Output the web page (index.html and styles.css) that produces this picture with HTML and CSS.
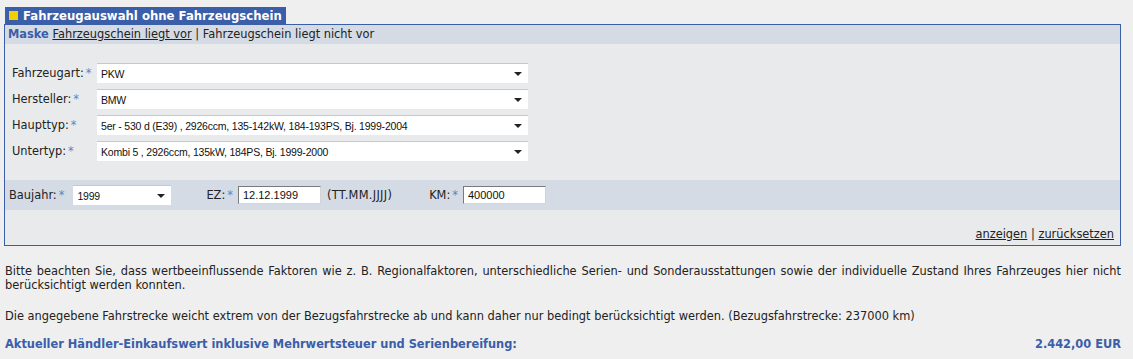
FILE: index.html
```html
<!doctype html>
<html lang="de">
<head>
  <meta charset="utf-8">
  <title>Fahrzeugauswahl</title>
  <link rel="stylesheet" href="styles.css">
</head>
<body>
<div class="tab"><span class="tab-box"></span>Fahrzeugauswahl ohne Fahrzeugschein</div>
<div class="panel">
  <div class="maskbar">
    <span class="mask">Maske</span>
    <a href="#">Fahrzeugschein liegt vor</a> | Fahrzeugschein liegt nicht vor
  </div>

  <div class="rows">
    <div class="row">
      <label class="lbl">Fahrzeugart:<span class="req">*</span></label>
      <div class="sel wide">PKW</div>
    </div>
    <div class="row">
      <label class="lbl">Hersteller:<span class="req">*</span></label>
      <div class="sel wide">BMW</div>
    </div>
    <div class="row">
      <label class="lbl">Haupttyp:<span class="req">*</span></label>
      <div class="sel wide">5er - 530 d (E39) , 2926ccm, 135-142kW, 184-193PS, Bj. 1999-2004</div>
    </div>
    <div class="row">
      <label class="lbl">Untertyp:<span class="req">*</span></label>
      <div class="sel wide">Kombi 5 , 2926ccm, 135kW, 184PS, Bj. 1999-2000</div>
    </div>
  </div>

  <div class="strip">
    <label>Baujahr:<span class="req">*</span></label>
    <div class="sel year">1999</div>
    <label class="ez">EZ:<span class="req">*</span></label>
    <div class="inp">12.12.1999</div>
    <span class="hint">(TT.MM.JJJJ)</span>
    <label class="km">KM:<span class="req">*</span></label>
    <div class="inp">400000</div>
  </div>

  <div class="actions">
    <a href="#">anzeigen</a> | <a href="#">zurücksetzen</a>
  </div>
</div>

<p class="note">Bitte beachten Sie, dass wertbeeinflussende Faktoren wie z. B. Regionalfaktoren, unterschiedliche Serien- und Sonderausstattungen sowie der individuelle Zustand Ihres Fahrzeuges hier nicht berücksichtigt werden konnten.</p>
<p class="note">Die angegebene Fahrstrecke weicht extrem von der Bezugsfahrstrecke ab und kann daher nur bedingt berücksichtigt werden. (Bezugsfahrstrecke: 237000 km)</p>

<div class="result">
  <span>Aktueller Händler-Einkaufswert inklusive Mehrwertsteuer und Serienbereifung:</span>
  <span>2.442,00 EUR</span>
</div>
</body>
</html>
```

FILE: styles.css
```css
body {
	margin: 0;
	padding: 7px 12px 0 4px;
	background-color: #efefef;
	font-family: "DejaVu Sans", Verdana, sans-serif;
	font-size: 11.4px;
	color: #222;
}
a { color: #222; }

.tab {
	display: inline-flex;
	align-items: center;
	margin-left: 1px;
	height: 17px;
	padding: 0 4px 0 4px;
	background-color: #3b5ea9;
	color: #fff;
	font-weight: bold;
	font-size: 11.7px;
}
.tab-box {
	width: 9px;
	height: 9px;
	background-color: #f5d000;
	margin-right: 5px;
}

.panel {
	border: 1px solid #3b5ea9;
	background-color: #e9eaec;
}
.maskbar {
	height: 19px;
	line-height: 19px;
	padding-left: 3px;
	background-color: #d5dbe4;
}
.mask {
	color: #3b5ea9;
	font-weight: bold;
}

.rows {
	display: flex;
	flex-direction: column;
	gap: 6px;
	padding: 19px 0 19px 7px;
}
.row {
	display: flex;
	align-items: center;
}
.lbl { width: 85px; }
.req {
	color: #5b86c8;
	margin-left: 2px;
}

.sel {
	position: relative;
	height: 20px;
	line-height: 20px;
	box-sizing: border-box;
	padding-left: 4px;
	background-color: #fff;
	border-top: 1px solid #c8c8c8;
	font-family: "Liberation Sans", Arial, sans-serif;
	font-size: 10.5px;
	letter-spacing: -0.2px;
	color: #111;
}
.sel::after {
	content: "";
	position: absolute;
	right: 6px;
	top: 8px;
	border-left: 4px solid transparent;
	border-right: 4px solid transparent;
	border-top: 4px solid #222;
}
.wide { width: 431px; }
.year { width: 98px; margin-left: 9px; }

.strip {
	display: flex;
	align-items: center;
	height: 30px;
	padding-left: 4px;
	background-color: #d5dbe4;
}
.ez { margin-left: 35px; margin-right: 5px; }
.km { margin-left: 37px; margin-right: 5px; }
.hint { margin-left: 6px; letter-spacing: 0.3px; }
.inp {
	width: 83px;
	height: 18px;
	line-height: 17px;
	box-sizing: border-box;
	padding-left: 4px;
	background-color: #fff;
	border: 1px solid #d4d4d4;
	border-top-color: #7a7a7a;
	border-left-color: #7a7a7a;
	font-family: "Liberation Sans", Arial, sans-serif;
	font-size: 11px;
	color: #111;
}

.actions {
	text-align: right;
	padding: 17px 6px 4px 0;
	line-height: 14px;
}

.note {
	margin: 18px 0 0 1px;
	line-height: 14px;
	text-align: justify;
}
.note + .note { margin-top: 17px; }

.result {
	display: flex;
	justify-content: space-between;
	margin: 14px 0 0 1px;
	color: #3b5ea9;
	font-weight: bold;
}
```
